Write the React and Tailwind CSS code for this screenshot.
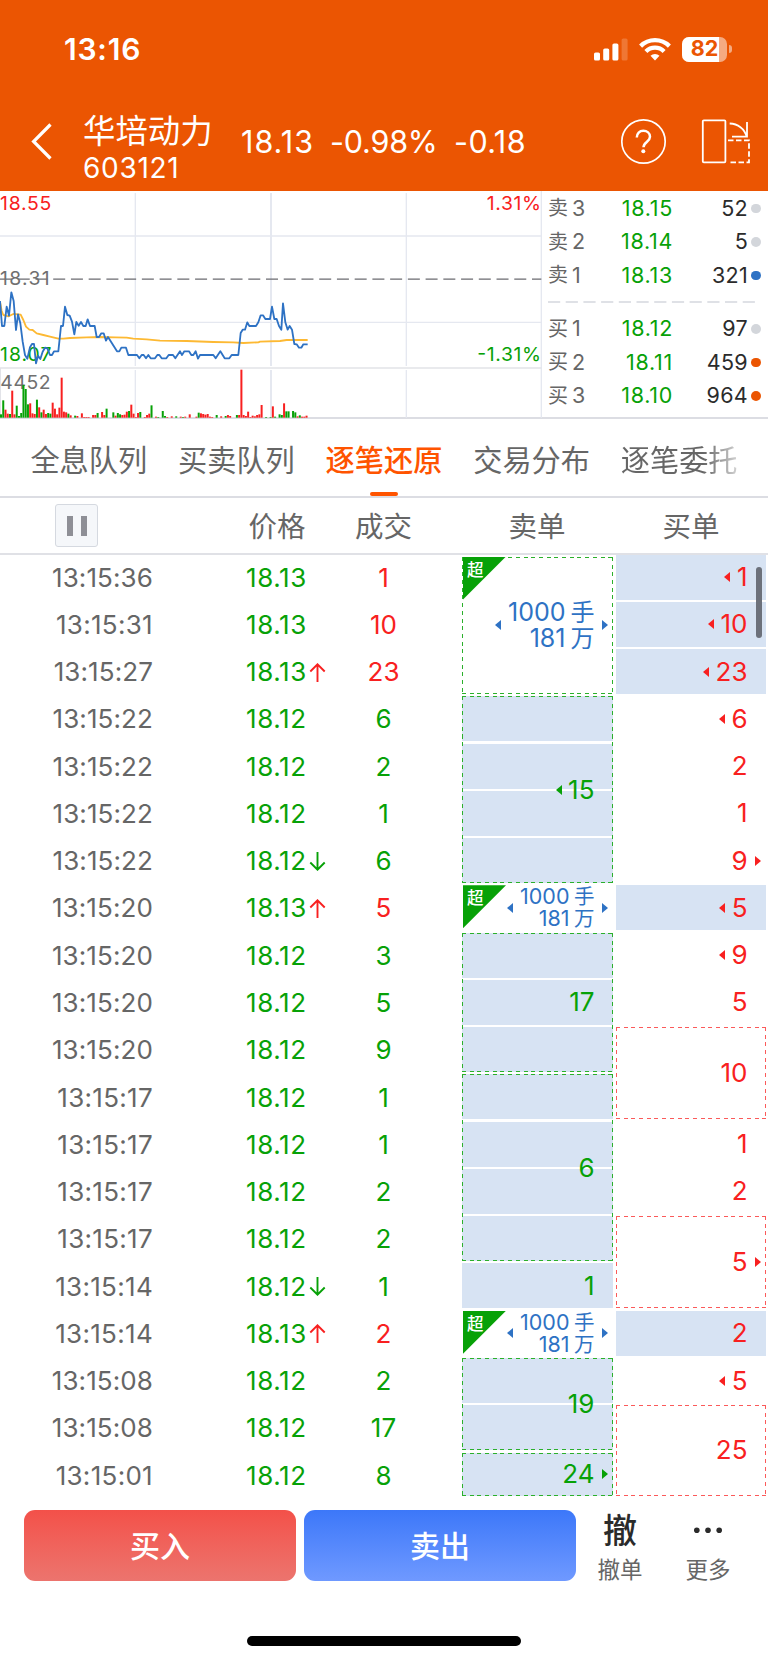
import React from "react";

const NUM = "font-['Inter','Noto_Sans_CJK_SC',sans-serif]";

const GREEN = "text-[#07a107]";
const RED = "text-[#f82020]";

const PRICE_LINE =
  "0,348 6,423 13,423 20,365 27,392 34,322 41,348 48,435 54,388 61,415 68,470 75,510 82,521 90,487 96,477 102,477 108,535 114,512 121,522 128,500 135,488 142,490 150,510 156,510 162,499 175,499 183,423 189,423 195,365 202,390 209,392 216,410 223,448 229,411 236,422 243,411 250,423 257,423 263,403 270,423 284,423 290,456 297,456 304,445 311,445 318,467 324,456 351,499 358,499 364,488 378,488 385,510 411,510 418,520 425,510 431,510 438,520 445,510 452,520 465,520 472,510 478,510 485,520 499,520 506,510 519,510 526,520 540,499 546,510 553,499 567,499 574,510 580,510 587,499 594,521 600,510 640,510 647,520 661,499 674,520 688,520 695,510 715,510 722,444 728,434 735,434 742,412 748,423 768,423 775,412 782,391 789,391 796,402 810,402 816,365 823,402 830,402 837,423 844,434 849,355 856,412 863,434 869,423 876,434 883,477 890,478 897,488 904,488 910,478 923,478";
const AVG_LINE =
  "0,350 5,378 10,390 25,394 40,387 62,389 70,405 78,425 88,434 98,435 110,445 130,450 150,455 175,461 190,461 210,459 260,457 300,456 345,457 380,458 400,461 440,463 480,467 560,468 640,471 700,472 730,474 775,472 780,470 840,468 860,465 923,465";
const VOLUME =
  "g10 g52 r24 r12 g11 r81 r10 g36 g5 g14 g98 g86 g40 r43 r13 r11 g54 r31 g16 r24 r11 g14 g12 r45 r27 r10 r30 r120 r18 r16 g12 r7 r0 g6 r5 r0 r13 r2 r2 r2 r0 r8 r8 g14 r0 r17 r8 g27 r0 r0 g16 r6 g14 g10 r8 r9 r18 g20 r39 r12 r2 r14 g17 r0 r2 r8 r12 g37 r0 r3 g2 r0 g20 g5 r2 r0 r4 r0 g4 r0 r3 g2 r3 r0 r10 r0 r0 r3 g15 r13 r11 r9 r11 r3 r2 r0 g8 r0 r4 r0 g5 r8 r5 r0 r0 g8 r8 r144 r8 r5 r18 r2 r6 r4 r8 r10 r38 r0 g2 r0 g2 r34 g3 r0 g10 g8 r43 g19 g19 r0 g20 g16 r4 g7 r3 r3 r6".split(" ");

const BOOK = [
  ["卖", "3", "18.15", "52", "bg-[#d3d6db]"],
  ["卖", "2", "18.14", "5", "bg-[#d3d6db]"],
  ["卖", "1", "18.13", "321", "bg-[#2e72c4]"],
  ["买", "1", "18.12", "97", "bg-[#d3d6db]"],
  ["买", "2", "18.11", "459", "bg-[#eb5502]"],
  ["买", "3", "18.10", "964", "bg-[#eb5502]"],
];

const TRADES = [
  ["13:15:36", "18.13", "", "1", "r"],
  ["13:15:31", "18.13", "", "10", "r"],
  ["13:15:27", "18.13", "up", "23", "r"],
  ["13:15:22", "18.12", "", "6", "g"],
  ["13:15:22", "18.12", "", "2", "g"],
  ["13:15:22", "18.12", "", "1", "g"],
  ["13:15:22", "18.12", "down", "6", "g"],
  ["13:15:20", "18.13", "up", "5", "r"],
  ["13:15:20", "18.12", "", "3", "g"],
  ["13:15:20", "18.12", "", "5", "g"],
  ["13:15:20", "18.12", "", "9", "g"],
  ["13:15:17", "18.12", "", "1", "g"],
  ["13:15:17", "18.12", "", "1", "g"],
  ["13:15:17", "18.12", "", "2", "g"],
  ["13:15:17", "18.12", "", "2", "g"],
  ["13:15:14", "18.12", "down", "1", "g"],
  ["13:15:14", "18.13", "up", "2", "r"],
  ["13:15:08", "18.12", "", "2", "g"],
  ["13:15:08", "18.12", "", "17", "g"],
  ["13:15:01", "18.12", "", "8", "g"],
];

const SELLS = [
  { span: 3, big: true, dashed: true, size: "mt-[2px] h-[137.5px]" },
  { span: 4, text: "15", fill: true, dashed: true, left: true },
  { span: 1, big: true },
  { span: 3, text: "17", fill: true, dashed: true },
  { span: 4, text: "6", fill: true, dashed: true },
  { span: 1, text: "1", fill: true },
  { span: 1, big: true },
  { span: 2, text: "19", fill: true, dashed: true },
  { span: 1, text: "24", fill: true, dashed: true, right: true, size: "h-[43px]" },
];

const BUYS = [
  { span: 1, text: "1", fill: true, left: true },
  { span: 1, text: "10", fill: true, left: true },
  { span: 1, text: "23", fill: true, left: true },
  { span: 1, text: "6", left: true },
  { span: 1, text: "2" },
  { span: 1, text: "1" },
  { span: 1, text: "9", right: true },
  { span: 1, text: "5", fill: true, left: true },
  { span: 1, text: "9", left: true },
  { span: 1, text: "5" },
  { span: 2, text: "10", dashed: true },
  { span: 1, text: "1" },
  { span: 1, text: "2" },
  { span: 2, text: "5", dashed: true, right: true },
  { span: 1, text: "2", fill: true },
  { span: 1, text: "5", left: true },
  { span: 2, text: "25", dashed: true, size: "h-[90.3px]" },
];

const SPAN_HEIGHT = {
  1: "h-[45px]",
  2: "h-[92.27px]",
  3: "h-[139.54px]",
  4: "h-[186.81px]",
};

function StatusBar() {
  return (
    <div className="flex h-[98px] items-center justify-between pl-[64px] pr-[36px]">
      <span className={`${NUM} text-[30px] font-semibold leading-none tracking-[0.8px] text-white`}>13:16</span>
      <div className="flex items-center">
        <svg className="h-[23px] w-[34px]" viewBox="0 0 34 23" fill="#fff">
          <rect x="0" y="14.5" width="6" height="8" rx="1.6" />
          <rect x="9.2" y="10.5" width="6" height="12" rx="1.6" />
          <rect x="18.4" y="5.5" width="6" height="17" rx="1.6" />
          <rect x="27.6" y="0.5" width="6" height="22" rx="1.6" opacity=".2" />
        </svg>
        <svg className="ml-[11px] h-[24px] w-[32px]" viewBox="0 0 32 24" fill="none" stroke="#fff" strokeWidth="4.3">
          <path d="M1.6 9.1a20.5 20.5 0 0 1 28.8 0" />
          <path d="M6.9 14.4a12.9 12.9 0 0 1 18.2 0" />
          <path d="M16 23.4l-4.5-4.6a6.4 6.4 0 0 1 9 0z" fill="#fff" stroke="none" />
        </svg>
        <div className="relative ml-[11px] h-[25px] w-[45px] overflow-hidden rounded-[7px] bg-white/50">
          <div className="h-full w-[37px] bg-white" />
          <span className={`${NUM} absolute inset-0 flex items-center justify-center text-[21.5px] font-bold leading-none text-[#eb5502]`}>82</span>
        </div>
        <div className="ml-[2px] h-[8px] w-[3px] rounded-r-full bg-white/50" />
      </div>
    </div>
  );
}

function TitleBar() {
  return (
    <div className="flex h-[92.5px] items-start text-white">
      <svg className="ml-[31px] mt-[25px] h-[37px] w-[21px]" viewBox="0 0 21 37" fill="none" stroke="#fff" strokeWidth="3.2">
        <path d="M19.5 1.5L2.6 18.5L19.5 35.5" />
      </svg>
      <div className="ml-[31px] mt-[12px] w-[151px]">
        <div className="font-['Noto_Sans_CJK_SC',sans-serif] text-[32.4px] leading-[38px]">华培动力</div>
        <div className={`${NUM} pt-[1px] text-[28px] leading-[38px] tracking-[0.7px]`}>603121</div>
      </div>
      <div className={`${NUM} mt-[25px] flex w-[340px] pl-[7px] text-[30.5px] leading-[38px]`}>
        <span className="w-[89px] tracking-[1px]">18.13</span>
        <span className="w-[124px] tracking-[-0.2px]">-0.98%</span>
        <span className="tracking-[0.4px]">-0.18</span>
      </div>
      <svg className="ml-[45px] mt-[20px] h-[48px] w-[48px]" viewBox="0 0 48 48" fill="none" stroke="#fff">
        <circle cx="24.5" cy="23.5" r="21.7" strokeWidth="1.7" />
        <path d="M17.8 19.6c0-4.2 2.8-6.8 6.5-6.8s6.7 2.4 6.7 6c0 5-6.5 5.3-6.5 10.4" strokeWidth="2.5" />
        <circle cx="24.3" cy="33.2" r="2" fill="#fff" stroke="none" />
      </svg>
      <svg className="ml-[34px] mt-[20px] h-[48px] w-[50px]" viewBox="0 0 50 48" fill="none" stroke="#fff" strokeWidth="1.8">
        <rect x="1.8" y="2.3" width="22.6" height="42" rx="1" />
        <path d="M28.7 5.5c8 .3 15 5 17 13.500M46 4v14.700H31" />
        <path d="M27 22.300h21v22H27" strokeDasharray="5.5 2.5" />
      </svg>
    </div>
  );
}

function Chart() {
  return (
    <svg
      className="h-[228px] w-[542px] shrink-0 font-['Inter',sans-serif]"
      viewBox="0 18 1626 684"
    >
      <g stroke="#e5e8f0" strokeWidth="4">
        <path d="M406 24V543M406 555V698M1219 24V543M1219 555V698" />
        <path d="M813 24V543M813 555V698" strokeWidth="6" />
        <path d="M1624 18V698" />
        <path d="M0 153H1624M0 412H1624" />
        <path d="M0 549H1624M1 549V698" stroke="#e2e3e8" />
      </g>
      <path d="M0 282.5H1624" stroke="#6b6b70" strokeWidth="4" strokeDasharray="36 17.2" />
      <g fontSize="58">
        <text x="0" y="75" fill="#f82020" textLength="154">18.55</text>
        <text x="0" y="301" fill="#707070" textLength="149">18.31</text>
        <text x="0" y="527" fill="#07a107" textLength="154">18.07</text>
        <text x="1" y="612" fill="#707070" textLength="151">4452</text>
        <text x="1623" y="75" fill="#f82020" textAnchor="end" textLength="163">1.31%</text>
        <text x="1623" y="528" fill="#07a107" textAnchor="end" textLength="191">-1.31%</text>
      </g>
      {VOLUME.map((v, i) => (
        <rect
          key={i}
          x={i * 6.74}
          y={698 - Number(v.slice(1))}
          width="6"
          height={Number(v.slice(1))}
          fill={v[0] === "r" ? "#f82020" : "#07a107"}
        />
      ))}
      <polyline points={AVG_LINE} fill="none" stroke="#fdb933" strokeWidth="5.5" strokeLinejoin="round" />
      <polyline points={PRICE_LINE} fill="none" stroke="#2e72c4" strokeWidth="5.5" strokeLinejoin="round" />
    </svg>
  );
}

function OrderBook() {
  return (
    <div className={`${NUM} flex flex-1 flex-col pl-[6px] pt-[1px] text-[21.5px]`}>
      {BOOK.map(([side, level, price, qty, dot], i) => (
        <React.Fragment key={i}>
          {i === 3 && (
            <svg className="h-[20px] w-[210px] shrink-0" viewBox="0 0 210 20">
              <path d="M0 10H208" stroke="#d5d7de" strokeWidth="1.7" strokeDasharray="12.2 5.5" />
            </svg>
          )}
          <div className="flex h-[33.5px] items-center leading-none">
            <span className="w-[24px] text-[20px] text-[#666]">{side}</span>
            <span className="w-[20px] text-[#666]">{level}</span>
            <span className={`w-[81px] text-right tracking-[0.7px] ${GREEN}`}>{price}</span>
            <span className="w-[75px] text-right tracking-[0.3px] text-[#2b2b2b]">{qty}</span>
            <span className={`ml-[3px] size-[9.5px] rounded-full ${dot}`} />
          </div>
        </React.Fragment>
      ))}
    </div>
  );
}

function Tabs() {
  return (
    <div className="flex h-[79px] justify-between border-b-2 border-[#dcdde3] bg-white pl-[15px] pr-[15px] font-['Noto_Sans_CJK_SC',sans-serif] text-[29.2px] text-[#666]">
      {["全息队列", "买卖队列", "逐笔还原", "交易分布"].map((t) => (
        <div
          key={t}
          className={
            t === "逐笔还原"
              ? "flex w-[147.6px] flex-col items-center font-medium text-[#ff5400]"
              : "flex w-[147.6px] flex-col items-center"
          }
        >
          <span className="mt-[18px] whitespace-nowrap leading-[42px]">{t}</span>
          {t === "逐笔还原" && <span className="mt-[13px] h-[4px] w-[28px] rounded-full bg-[#ff5400]" />}
        </div>
      ))}
      <div className="flex w-[147.6px] flex-col items-center">
        <span className="mt-[18px] whitespace-nowrap bg-linear-to-r from-[#666] from-70% to-[#d5d5d5] bg-clip-text leading-[42px] text-transparent">
          逐笔委托
        </span>
      </div>
    </div>
  );
}

function TableHead() {
  return (
    <div className="flex h-[57px] items-center border-b-2 border-[#e0e1e6] font-['Noto_Sans_CJK_SC',sans-serif] text-[28.5px] leading-none text-[#666]">
      <div className="flex w-[223px] pl-[55px]">
        <span className="flex h-[43px] w-[43px] items-center justify-center gap-[8px] rounded-[3px] border border-[#d5d9e0] bg-[#f5f7fa]">
          <i className="h-[20px] w-[6px] bg-[#8e8f96]" />
          <i className="h-[20px] w-[6px] bg-[#8e8f96]" />
        </span>
      </div>
      <span className="w-[108px] text-center">价格</span>
      <span className="w-[105px] text-center">成交</span>
      <span className="w-[202px] text-center">卖单</span>
      <span className="w-[106px] text-center">买单</span>
    </div>
  );
}

function Arrow({ dir }) {
  return (
    <svg
      className={`ml-[2.5px] h-[19px] w-[17px] ${dir === "up" ? RED : GREEN}`}
      viewBox="0 0 17 19"
      fill="none"
      stroke="currentColor"
      strokeWidth="1.9"
    >
      <path d={dir === "up" ? "M8.5 19V1.5M1.3 8.5L8.5 1.3L15.7 8.5" : "M8.5 0V17.5M1.3 10.5L8.5 17.7L15.7 10.5"} />
    </svg>
  );
}

function Triangle({ dir, className }) {
  return (
    <svg className={`h-[10px] w-[6px] ${className}`} viewBox="0 0 6 10" fill="currentColor">
      <path d={dir === "left" ? "M6 0V10L0 5Z" : "M0 0V10L6 5Z"} />
    </svg>
  );
}

function Dashes({ color }) {
  const line =
    color === "green"
      ? "bg-[repeating-linear-gradient(90deg,#2bb02b_0_4px,transparent_4px_7.7px)]"
      : "bg-[repeating-linear-gradient(90deg,#fb5a5a_0_4px,transparent_4px_7.7px)]";
  const side =
    color === "green"
      ? "bg-[repeating-linear-gradient(180deg,#2bb02b_0_4px,transparent_4px_7.7px)]"
      : "bg-[repeating-linear-gradient(180deg,#fb5a5a_0_4px,transparent_4px_7.7px)]";
  return (
    <>
      <i className={`absolute inset-x-0 top-0 h-px ${line}`} />
      <i className={`absolute inset-x-0 bottom-0 h-px ${line}`} />
      <i className={`absolute inset-y-0 left-0 w-px ${side}`} />
      <i className={`absolute inset-y-0 right-0 w-px ${side}`} />
    </>
  );
}

function LotSize({ large }) {
  const rows = [["1000", "手"], ["181", "万"]];
  return (
    <div className={large ? "text-[25px]" : "text-[21.5px]"}>
      {rows.map(([value, unit]) => (
        <div
          key={unit}
          className={large ? "flex h-[26px] items-center justify-end" : "flex h-[22px] items-center justify-end"}
        >
          <span className={large ? "leading-[25px]" : "leading-[21px]"}>{value}</span>
          <span className={large ? "ml-[5px] text-[24px] leading-[25px]" : "ml-[4.5px] text-[20.5px] leading-[21px]"}>
            {unit}
          </span>
        </div>
      ))}
    </div>
  );
}

function Cell({ cell, side }) {
  const tone = side === "sell" ? GREEN : RED;
  const box = side === "sell" ? "w-[151px] pr-[18.5px]" : "w-[150px] pr-[18.5px]";
  return (
    <div className={`relative flex shrink-0 items-center justify-end ${box} ${cell.size || SPAN_HEIGHT[cell.span]}`}>
      {cell.fill && (
        <div className="absolute inset-0 flex flex-col gap-[2.27px]">
          {Array.from({ length: cell.span }, (_, i) => (
            <div key={i} className="flex-1 bg-[#d7e3f3]" />
          ))}
        </div>
      )}
      {cell.dashed && <Dashes color={side === "sell" ? "green" : "red"} />}
      {cell.big ? (
        <>
          <div className="absolute left-px top-0 size-[43px] bg-[#07a107] [clip-path:polygon(0_0,100%_0,0_100%)]">
            <span className="block pl-[4px] pt-[4px] font-['Noto_Sans_CJK_SC',sans-serif] text-[16.5px] font-medium leading-none text-white">超</span>
          </div>
          <div className="relative flex items-center text-[#2e72c4]">
            <Triangle dir="left" className="mr-[7px]" />
            <LotSize large={cell.span > 1} />
          </div>
        </>
      ) : (
        <div className={`relative flex items-center ${tone}`}>
          {cell.left && <Triangle dir="left" className="mr-[6.5px]" />}
          <span>{cell.text}</span>
        </div>
      )}
      {(cell.right || cell.big) && (
        <Triangle dir="right" className={`absolute right-[5px] ${cell.big ? "text-[#2e72c4]" : tone}`} />
      )}
    </div>
  );
}

function Trades() {
  return (
    <div className={`${NUM} relative flex h-[946px] text-[26px] leading-none`}>
      <div className="-mt-px w-[462px]">
        {TRADES.map(([time, price, dir, qty, tone], i) => (
          <div key={i} className="flex h-[47.27px] items-center">
            <span
              className={
                /(31|17|14|01)$/.test(time)
                  ? "w-[153px] text-right tracking-[0.3px] text-[#666]"
                  : "w-[153px] text-right tracking-[0.1px] text-[#666]"
              }
            >
              {time}
            </span>
            <span className={`flex w-[180px] items-center pl-[93px] tracking-[0.6px] ${GREEN}`}>
              {price}
              {dir && <Arrow dir={dir} />}
            </span>
            <span className={`w-[101px] text-center ${tone === "r" ? RED : GREEN}`}>{qty}</span>
          </div>
        ))}
      </div>
      <div className="-mt-[0.5px] flex w-[154px] flex-col gap-[2.27px]">
        {SELLS.map((c, i) => <Cell key={i} cell={c} side="sell" />)}
      </div>
      <div className="-mt-[0.5px] flex flex-col gap-[2.27px]">
        {BUYS.map((c, i) => <Cell key={i} cell={c} side="buy" />)}
      </div>
      <div className="absolute right-[6px] top-[12px] h-[71px] w-[6px] rounded-full bg-[#6c717b]" />
    </div>
  );
}

function BottomBar() {
  return (
    <div className="flex pl-[24px] pt-[9px] font-['Noto_Sans_CJK_SC',sans-serif] font-medium">
      <div className="mr-[8px] flex h-[71px] w-[272px] items-center justify-center rounded-[11px] bg-linear-to-b from-[#f35049] to-[#ec746e] pb-[2px] text-[30px] text-white">
        买入
      </div>
      <div className="flex h-[71px] w-[272px] items-center justify-center rounded-[11px] bg-linear-to-b from-[#3c77f9] to-[#6f99ff] pb-[2px] text-[30px] text-white">
        卖出
      </div>
      <div className="flex w-[88px] flex-col items-center">
        <span className="-mt-px text-[34px] leading-[40px] text-[#2b2b2b]">撤</span>
        <span className="mt-[4px] text-[22.5px] font-normal leading-[30px] text-[#666]">撤单</span>
      </div>
      <div className="flex w-[88px] flex-col items-center">
        <svg className="h-[39px] w-[30px]" viewBox="0 1 30 39" fill="#2b2b2b">
          <circle cx="3.8" cy="21.2" r="2.8" />
          <circle cx="15" cy="21.2" r="2.8" />
          <circle cx="26.2" cy="21.2" r="2.8" />
        </svg>
        <span className="mt-[4px] text-[22.5px] font-normal leading-[30px] text-[#666]">更多</span>
      </div>
    </div>
  );
}

export default function App() {
  return (
    <div className="flex h-[1663px] w-[768px] flex-col overflow-hidden bg-white">
      <header className="h-[190.5px] shrink-0 bg-[#eb5502]">
        <StatusBar />
        <TitleBar />
      </header>
      <section className="flex h-[228.5px] shrink-0 border-b-2 border-[#dcdde3]">
        <Chart />
        <OrderBook />
      </section>
      <Tabs />
      <TableHead />
      <Trades />
      <BottomBar />
      <div className="mx-auto mt-[53px] h-[10px] w-[274px] shrink-0 rounded-full bg-black" />
    </div>
  );
}
